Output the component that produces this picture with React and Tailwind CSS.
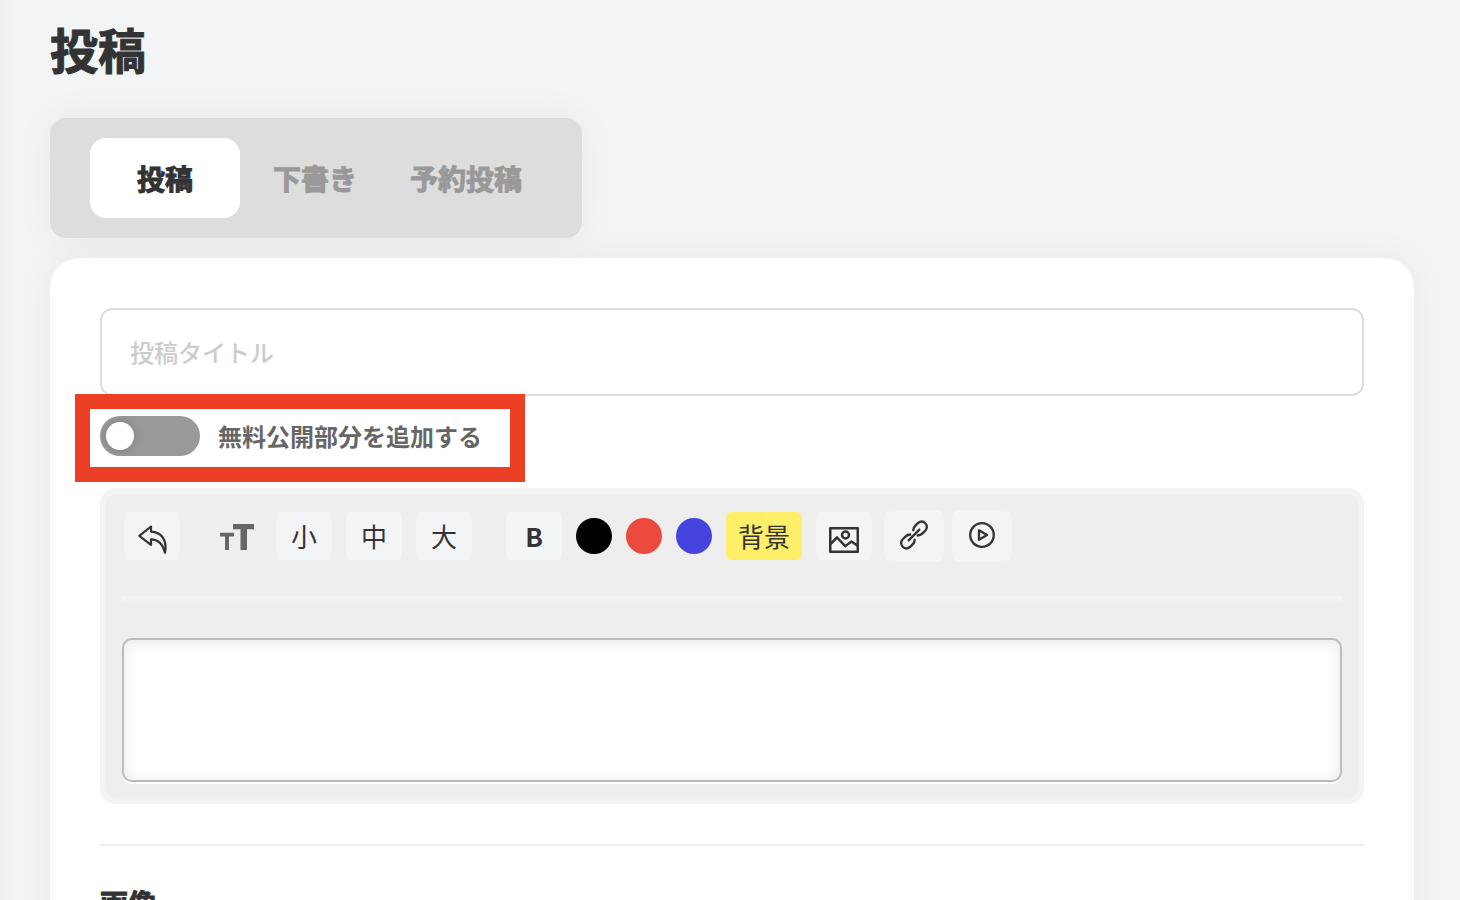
const TOOL = "flex h-12 w-14 items-center justify-center rounded-md bg-[#f3f4f6] text-[26px] leading-none text-[#333] cursor-pointer";

function UndoIcon() {
  return (
    <svg className="mt-1.5" width="32" height="32" viewBox="0 0 32 32" fill="none" stroke="#333" strokeWidth="2.2" strokeLinejoin="round" aria-hidden="true">
      <path d="M15 3.500 3.300 12.800 15 21.800v-5.400c6.500 0 11.500 4 14 13.300C31.500 17 25 8.800 15 8.600z" />
    </svg>
  );
}

function TextSizeIcon() {
  return (
    <svg className="mt-0.5" width="34" height="26" viewBox="0 0 34 26" fill="#666" aria-hidden="true">
      <path d="M13 0h21v5.300h-7V26h-6.500V5.300H13zM0 8.800h14v3.700H9V26H5V12.500H0z" />
    </svg>
  );
}

function ImageIcon() {
  return (
    <svg className="mt-2" width="30" height="26" viewBox="0 0 30 26" fill="none" stroke="#333" strokeWidth="2.500" strokeLinejoin="round" aria-hidden="true">
      <rect x="1.250" y="1.250" width="27.500" height="23.500" />
      <circle cx="16.500" cy="8" r="3.500" />
      <path d="M1 17.500 8 10.500l8.200 8.700 6.300-4.700 6.500 4.500" strokeLinejoin="miter" />
    </svg>
  );
}

function LinkIcon() {
  return (
    <svg className="mb-0.5" width="30" height="30" viewBox="0 0 28 28" fill="none" stroke="#333" strokeWidth="2.200" strokeLinecap="round" aria-hidden="true">
      <path d="M9 19 19 9" />
      <path d="M13.300 9.500c0-2 .7-3 2.200-4.500l2-2c2.500-2 5-2 7 0s2 5 0 7l-2.500 2.500c-1.500 1.500-2.500 2-4.500 2" />
      <path d="M14.700 18.500c0 2-.7 3-2.200 4.500l-2 2c-2.500 2-5 2-7 0s-2-5 0-7L6 15.500c1.500-1.500 2.500-2 4.500-2" />
    </svg>
  );
}

function PlayIcon() {
  return (
    <svg className="mb-0.5" width="26" height="26" viewBox="0 0 26 26" fill="none" stroke="#333" strokeWidth="2.300" strokeLinejoin="round" aria-hidden="true">
      <circle cx="13" cy="13" r="11.800" />
      <path d="M10 8.200v9.600l8-4.800z" />
    </svg>
  );
}

export default function App() {
  return (
    <div className="h-screen overflow-x-hidden overflow-y-auto bg-[#f3f4f6] pr-[46px] pb-12 pl-[50px] font-['Noto_Sans_CJK_JP',sans-serif] text-[#333] shadow-[inset_20px_0_20px_-20px_rgba(0,0,0,0.05)] [scrollbar-width:none]">
      <h1 className="pt-4 text-[48px] leading-[64px] font-bold [-webkit-text-stroke:1px_currentColor]">投稿</h1>

      <nav className="relative mt-[38px] flex w-fit rounded-2xl bg-[#ddd] px-10 py-5 text-[28px] font-bold text-[#999] shadow-[0_0_40px_rgba(0,0,0,0.05)] [-webkit-text-stroke:1px_currentColor]">
        <button type="button" className="h-20 min-w-[150px] rounded-2xl bg-white px-5 text-[#333]">投稿</button>
        <button type="button" className="h-20 min-w-[150px] px-5">下書き</button>
        <button type="button" className="h-20 min-w-[150px] px-5">予約投稿</button>
      </nav>

      <main className="mt-5 rounded-[30px] bg-white p-[50px] shadow-[0_0_40px_rgba(0,0,0,0.05)]">
        <input
          type="text"
          aria-label="投稿タイトル"
          placeholder="投稿タイトル"
          className="block h-[88px] w-full rounded-xl border-2 border-[#ddd] px-7 pb-0.5 text-2xl font-medium outline-none placeholder:text-[#ccc]"
        />

        <div className="relative mt-5 flex h-10 w-fit items-center">
          <label className="flex cursor-pointer items-center gap-[18px] text-2xl font-bold text-[#666]">
            <input
              type="checkbox"
              role="switch"
              className="h-10 w-[100px] cursor-pointer appearance-none rounded-full bg-[#999] p-1.5 before:block before:size-7 before:rounded-full before:bg-white before:shadow-[0_0_10px_rgba(0,0,0,0.2)] before:transition-transform checked:bg-[#4444dd] checked:before:translate-x-[60px]"
            />
            無料公開部分を追加する
          </label>
          <div className="pointer-events-none absolute -top-[22px] -left-[25px] h-[88px] w-[450px] border-[15px] border-[#eb4026]" />
        </div>

        <section className="mt-8 rounded-2xl border-[6px] border-[#f3f3f3] bg-[#eee] px-4 pt-4 pb-4">
          <div className="flex h-[52px] items-center px-0.5">
            <button type="button" aria-label="元に戻す" className={TOOL}><UndoIcon /></button>
            <span className="mr-[22px] ml-10"><TextSizeIcon /></span>
            <div className="flex gap-3.5">
              <button type="button" className={TOOL}>小</button>
              <button type="button" className={TOOL}>中</button>
              <button type="button" className={TOOL}>大</button>
            </div>
            <div className="ml-[34px] flex items-center gap-3.5">
              <button type="button" className={TOOL + " font-bold"}>B</button>
              <button type="button" aria-label="黒" className="size-9 rounded-full bg-black" />
              <button type="button" aria-label="赤" className="size-9 rounded-full bg-[#ec4a3f]" />
              <button type="button" aria-label="青" className="size-9 rounded-full bg-[#4444dd]" />
              <button type="button" className="h-12 rounded-md bg-[#fdef68] px-3 text-[26px] leading-none">背景</button>
              <button type="button" aria-label="画像を挿入" className={TOOL}><ImageIcon /></button>
            </div>
            <div className="ml-3 flex gap-2">
              <button type="button" aria-label="リンクを挿入" className="flex h-[52px] w-[60px] items-center justify-center rounded-lg bg-[#f3f4f6]"><LinkIcon /></button>
              <button type="button" aria-label="動画を挿入" className="flex h-[52px] w-[60px] items-center justify-center rounded-lg bg-[#f3f4f6]"><PlayIcon /></button>
            </div>
          </div>
          <hr className="mt-[34px] mb-9 border-t-[6px] border-[#f3f3f3]" />
          <textarea
            aria-label="本文"
            className="block h-36 w-full resize-none rounded-[10px] border-2 border-[#bbb] bg-white p-4 text-2xl shadow-[0_2px_0_#fff,inset_0_2px_14px_rgba(0,0,0,0.10)] outline-none"
          />
        </section>

        <hr className="mt-10 border-t-2 border-[#eee]" />
        <h2 className="mt-9 text-[28px] leading-[42px] font-bold [-webkit-text-stroke:1px_currentColor]">画像</h2>
      </main>
    </div>
  );
}
